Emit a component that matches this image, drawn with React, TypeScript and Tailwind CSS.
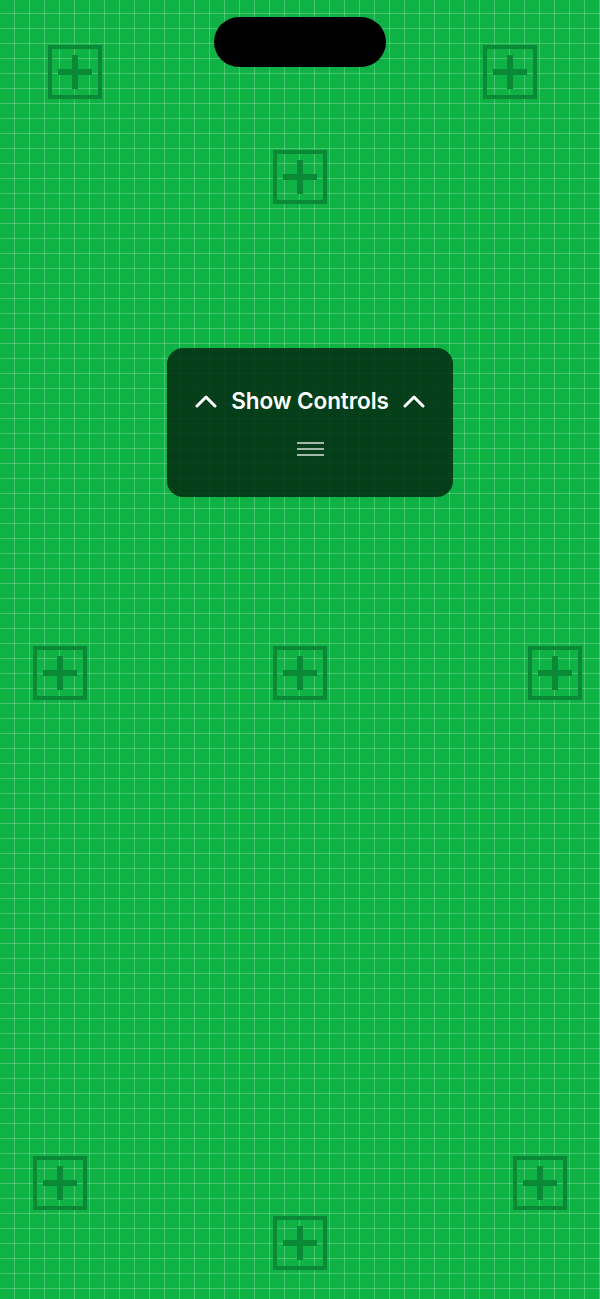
import React from "react";

const markers = [
  { x: 48, y: 45 },
  { x: 483, y: 45 },
  { x: 273, y: 150 },
  { x: 33, y: 646 },
  { x: 273, y: 646 },
  { x: 528, y: 646 },
  { x: 33, y: 1156 },
  { x: 513, y: 1156 },
  { x: 273, y: 1216 },
];

function Chevron() {
  return (
    <svg width="22" height="14" viewBox="0 0 22 14" fill="none">
      <polyline
        points="2,12 11,3 20,12"
        stroke="white"
        strokeWidth="3"
        strokeLinecap="round"
        strokeLinejoin="round"
      />
    </svg>
  );
}

function Marker({ x, y }: { x: number; y: number }) {
  return (
    <div
      className="absolute w-[54px] h-[54px] border-[4px] border-[#0a8a36] flex items-center justify-center"
      style={{ left: x, top: y }}
    >
      <div className="relative w-[34px] h-[34px]">
        <div className="absolute left-0 right-0 top-[14px] h-[6px] bg-[#0a8a36]" />
        <div className="absolute top-0 bottom-0 left-[14px] w-[6px] bg-[#0a8a36]" />
      </div>
    </div>
  );
}

export default function App() {
  return (
    <div
      className="relative w-full h-[1299px] overflow-hidden bg-[#0fb244] bg-[image:linear-gradient(to_right,rgba(255,255,255,0.24)_1px,transparent_1px),linear-gradient(to_bottom,rgba(255,255,255,0.24)_1px,transparent_1px)] bg-[size:15px_15px] bg-[position:14px_13px]"
      style={{ fontFamily: "Inter, 'Noto Sans', sans-serif" }}
    >
      {markers.map((m, i) => (
        <Marker key={i} x={m.x} y={m.y} />
      ))}

      <div className="relative flex flex-col items-center pt-[17px]">
        <div className="w-[172px] h-[50px] rounded-full bg-black" />

        <div className="mt-[281px] ml-[20px] w-[286px] h-[149px] rounded-[16px] bg-[#022a12]/85 flex flex-col items-center pt-[40px]">
          <div className="flex items-center gap-[14px] h-[26px]">
            <Chevron />
            <span className="text-white text-[22.5px] font-semibold leading-none tracking-[-0.1px]">
              Show Controls
            </span>
            <Chevron />
          </div>
          <div className="mt-[28px] flex flex-col gap-[4px]">
            <div className="w-[27px] h-[2px] bg-[#a3b8aa]" />
            <div className="w-[27px] h-[2px] bg-[#a3b8aa]" />
            <div className="w-[27px] h-[2px] bg-[#a3b8aa]" />
          </div>
        </div>
      </div>
    </div>
  );
}
